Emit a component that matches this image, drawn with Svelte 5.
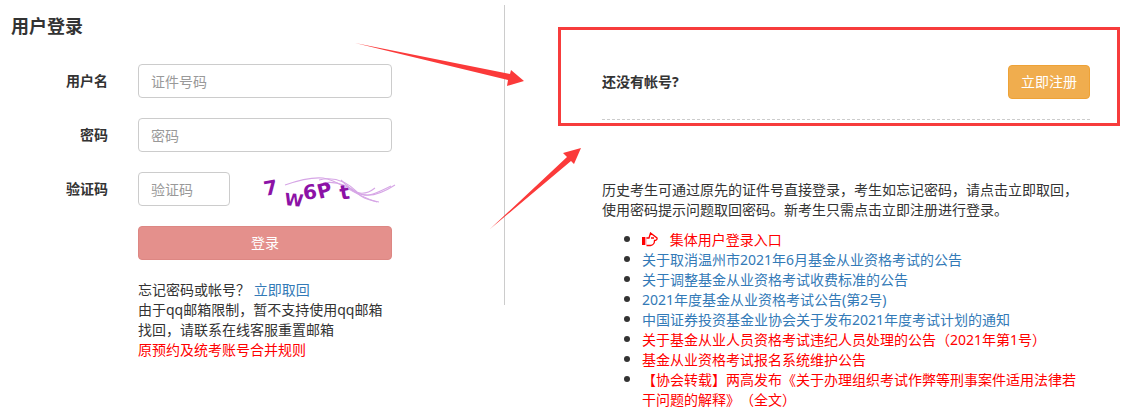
<script>
	const notices = [
		{ text: '关于取消温州市2021年6月基金从业资格考试的公告' },
		{ text: '关于调整基金从业资格考试收费标准的公告' },
		{ text: '2021年度基金从业资格考试公告(第2号)' },
		{ text: '中国证券投资基金业协会关于发布2021年度考试计划的通知' },
		{ text: '关于基金从业人员资格考试违纪人员处理的公告（2021年第1号）', red: true },
		{ text: '基金从业资格考试报名系统维护公告', red: true },
		{ text: '【协会转载】两高发布《关于办理组织考试作弊等刑事案件适用法律若干问题的解释》（全文）', red: true }
	];
</script>

<div class="page">
	<section class="login">
		<h2>用户登录</h2>
		<form class="form">
			<div class="row">
				<label for="user">用户名</label>
				<input id="user" placeholder="证件号码" />
			</div>
			<div class="row">
				<label for="pwd">密码</label>
				<input id="pwd" placeholder="密码" />
			</div>
			<div class="row">
				<label for="code">验证码</label>
				<input id="code" class="short" placeholder="验证码" />
				<svg class="captcha" width="134" height="34" viewBox="0 0 134 34">
					<g fill="none" stroke="#d6a6e6" stroke-width="1.1">
						<path d="M22 13 C36 8 48 5 60 6 C76 8 88 22 114 30" />
						<path d="M56 8 C72 4 84 10 94 20 C104 27 118 22 132 13" />
						<path d="M78 8 C88 18 98 26 110 22 C116 20 124 16 128 14" />
						<path d="M84 14 C92 22 102 24 112 16" />
						<path d="M60 11 C76 8 88 16 98 24 C104 28 110 29 116 30" />
					</g>
					<g class="glyphs" fill="#8c12a6">
						<text transform="translate(2 24) rotate(-10)">7</text>
						<text transform="translate(21 33) rotate(6)" class="wide">W</text>
						<text transform="translate(41 28) rotate(-8)">6</text>
						<text transform="translate(56 27) rotate(-14)">P</text>
						<text transform="translate(78 28) rotate(-10)">t</text>
					</g>
				</svg>
			</div>
			<div class="row">
				<span class="spacer"></span>
				<button type="button" class="submit">登录</button>
			</div>
		</form>
		<div class="help">
			<p>忘记密码或帐号？ <a href="#top">立即取回</a></p>
			<p>由于qq邮箱限制，暂不支持使用qq邮箱找回，请联系在线客服重置邮箱</p>
			<p><a href="#top" class="red">原预约及统考账号合并规则</a></p>
		</div>
	</section>

	<section class="side">
		<div class="register">
			<strong>还没有帐号?</strong>
			<button type="button" class="signup">立即注册</button>
		</div>
		<p class="intro">历史考生可通过原先的证件号直接登录，考生如忘记密码，请点击立即取回，使用密码提示问题取回密码。新考生只需点击立即注册进行登录。</p>
		<ul>
			<li>
				<a href="#top" class="red entry">
					<svg width="16" height="15" viewBox="0 0 16 15" aria-hidden="true">
						<rect x="0" y="5" width="3" height="8" fill="#f00" />
						<rect x="3" y="5" width="1.5" height="8" fill="#ff9aa8" />
						<path d="M4.5 6 H7 L8.5 1 L15 6 C15.5 7.5 14 8.5 12.5 8.5 C12.5 11 11 13.5 8.5 13.5 H4.5 M9 6 H12" fill="none" stroke="#f00" stroke-width="1.3" />
					</svg>
					<span>集体用户登录入口</span>
				</a>
			</li>
			{#each notices as item}
				<li><a href="#top" class:red={item.red}>{item.text}</a></li>
			{/each}
		</ul>
	</section>

	<!-- annotations drawn over the page -->
	<div class="redbox"></div>
	<svg class="arrows" width="1135" height="410" viewBox="0 0 1135 410" aria-hidden="true">
		<polygon fill="#fb3a3a" points="355,43 510,74 511,70 524,81 507,86 508,80" />
		<polygon fill="#fb3a3a" points="490,229 567,157 563,153 581,148 574,164 571,161" />
	</svg>
</div>

<style>
	:global(body) {
		margin: 0;
		background: #fff;
	}

	.page {
		position: relative;
		display: flex;
		width: 1135px;
		height: 410px;
		overflow: hidden;
		font-family: "Noto Sans", "Noto Sans CJK SC", sans-serif;
		font-size: 14px;
		line-height: 20px;
		color: #333;
		text-spacing-trim: space-all;
	}

	a {
		color: #337ab7;
		text-decoration: none;
	}

	a.red {
		color: #f00;
	}

	.login {
		box-sizing: border-box;
		width: 505px;
		height: 300px;
		margin-top: 5px;
		border-right: 1px solid #ccc;
		flex-shrink: 0;
	}

	h2 {
		margin: 10px 0 0 11px;
		font-size: 18px;
		line-height: 22px;
		font-weight: 700;
	}

	.form {
		display: flex;
		flex-direction: column;
		gap: 20px;
		margin-top: 27px;
	}

	.row {
		display: flex;
		align-items: center;
	}

	label {
		width: 108px;
		margin-right: 30px;
		text-align: right;
		font-weight: 700;
	}

	.spacer {
		width: 138px;
	}

	input {
		box-sizing: border-box;
		width: 254px;
		height: 34px;
		padding: 0 12px;
		border: 1px solid #ccc;
		border-radius: 4px;
		font: inherit;
		color: #555;
		outline: none;
	}

	input::placeholder {
		color: #999;
	}

	input.short {
		width: 92px;
	}

	.captcha {
		margin-left: 33px;
		overflow: visible;
	}

	.glyphs text {
		font-family: "DejaVu Sans", sans-serif;
		font-size: 20px;
		font-weight: 700;
	}

	.glyphs .wide {
		font-size: 17px;
	}

	button {
		height: 34px;
		border-radius: 4px;
		color: #fff;
		font: inherit;
		cursor: pointer;
	}

	.submit {
		width: 254px;
		background: #e4908c;
		border: 1px solid #dd8783;
	}

	.help {
		width: 254px;
		margin: 20px 0 0 138px;
	}

	.help p {
		margin: 0;
	}

	.side {
		box-sizing: border-box;
		width: 488px;
		margin-left: 97px;
		flex-shrink: 0;
	}

	.register {
		display: flex;
		justify-content: space-between;
		align-items: center;
		margin-top: 65px;
		padding-bottom: 20px;
		border-bottom: 1px dashed #ccc;
	}

	.signup {
		width: 82px;
		background: #f0ad4e;
		border: 1px solid #eea236;
	}

	.intro {
		margin: 60px 0 0;
	}

	ul {
		margin: 10px 0 0;
		padding: 0 0 0 40px;
		list-style: none;
	}

	li {
		position: relative;
		padding-right: 8px;
	}

	/* round bullet, bigger than the default marker */
	li::before {
		content: "";
		position: absolute;
		left: -18px;
		top: 6px;
		width: 6px;
		height: 6px;
		border-radius: 50%;
		background: #333;
	}

	.entry svg {
		vertical-align: -2px;
		margin-right: 8px;
	}

	.redbox {
		position: absolute;
		left: 558px;
		top: 27px;
		width: 562px;
		height: 99px;
		box-sizing: border-box;
		border: 3px solid #f73c3c;
	}

	.arrows {
		position: absolute;
		left: 0;
		top: 0;
		pointer-events: none;
	}
</style>
